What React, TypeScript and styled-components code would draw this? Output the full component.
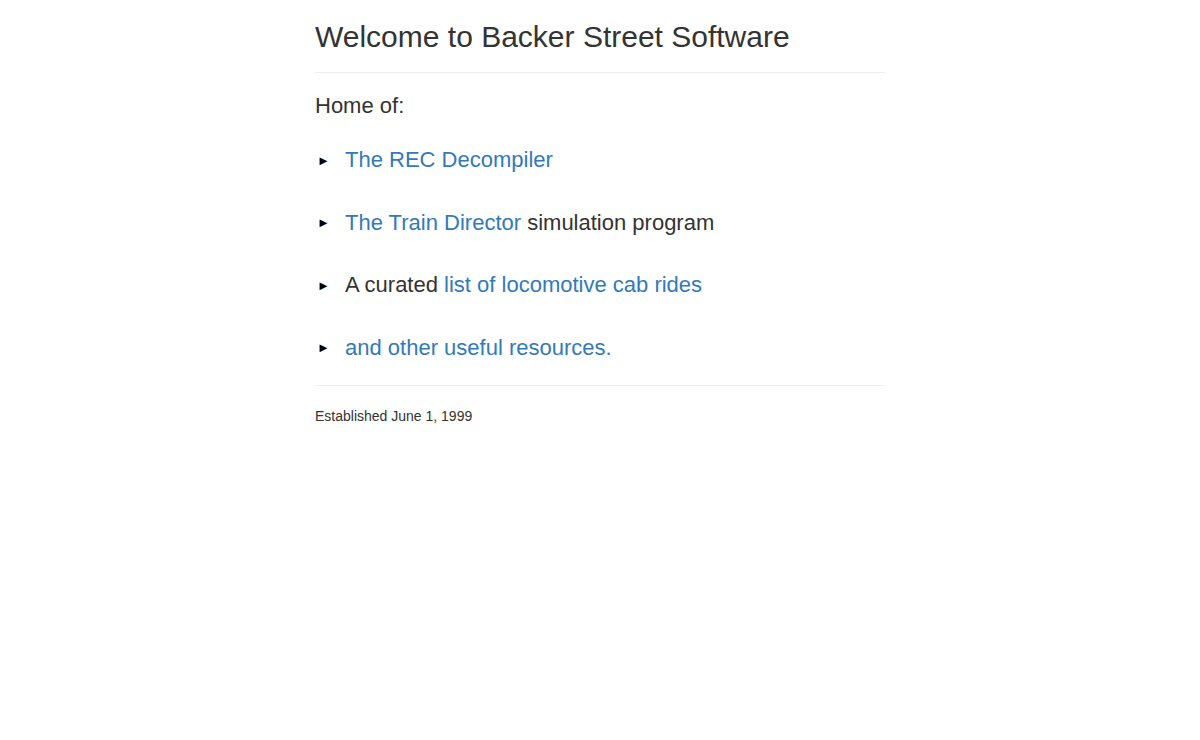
import styled, { createGlobalStyle } from 'styled-components';

const Global = createGlobalStyle`
    body {
        margin: 0;
        background: #fff;
        color: #333;
        font-family: "Liberation Sans", Arial, sans-serif;
    }
`;

const Container = styled.div`
    width: 570px;
    margin: 0 auto;
    padding-top: 19px;
`;

const Title = styled.h1`
    font-size: 30px;
    font-weight: 400;
    line-height: 36px;
    margin: 0;
    padding-bottom: 17px;
    border-bottom: 1px solid #eee;
`;

const Lead = styled.p`
    font-size: 22px;
    line-height: 30px;
    margin: 18px 0 0;
`;

const List = styled.ul`
    list-style: none;
    margin: 0;
    padding: 8px 0 6px;
    border-bottom: 1px solid #eee;
`;

const Item = styled.li`
    display: flex;
    align-items: center;
    height: 62.5px;
    font-size: 22px;
`;

const Bullet = styled.span`
    font-size: 13px;
    color: #000;
    width: 28px;
    flex: none;
    padding-left: 2px;
`;

const A = styled.a`
    color: #337ab7;
    text-decoration: none;
`;

const Footer = styled.p`
    font-size: 14px;
    margin: 22px 0 0;
`;

const items = [
    [<A href="#">The REC Decompiler</A>],
    [<A href="#">The Train Director</A>, ' simulation program'],
    ['A curated ', <A href="#">list of locomotive cab rides</A>],
    [<A href="#">and other useful resources.</A>],
];

export default function App() {
    return (
        <>
            <Global />
            <Container>
                <Title>Welcome to Backer Street Software</Title>
                <Lead>Home of:</Lead>
                <List>
                    {items.map((parts, i) => (
                        <Item key={i}>
                            <Bullet>►</Bullet>
                            <span>{parts.map((p, j) => <span key={j}>{p}</span>)}</span>
                        </Item>
                    ))}
                </List>
                <Footer>Established June 1, 1999</Footer>
            </Container>
        </>
    );
}
